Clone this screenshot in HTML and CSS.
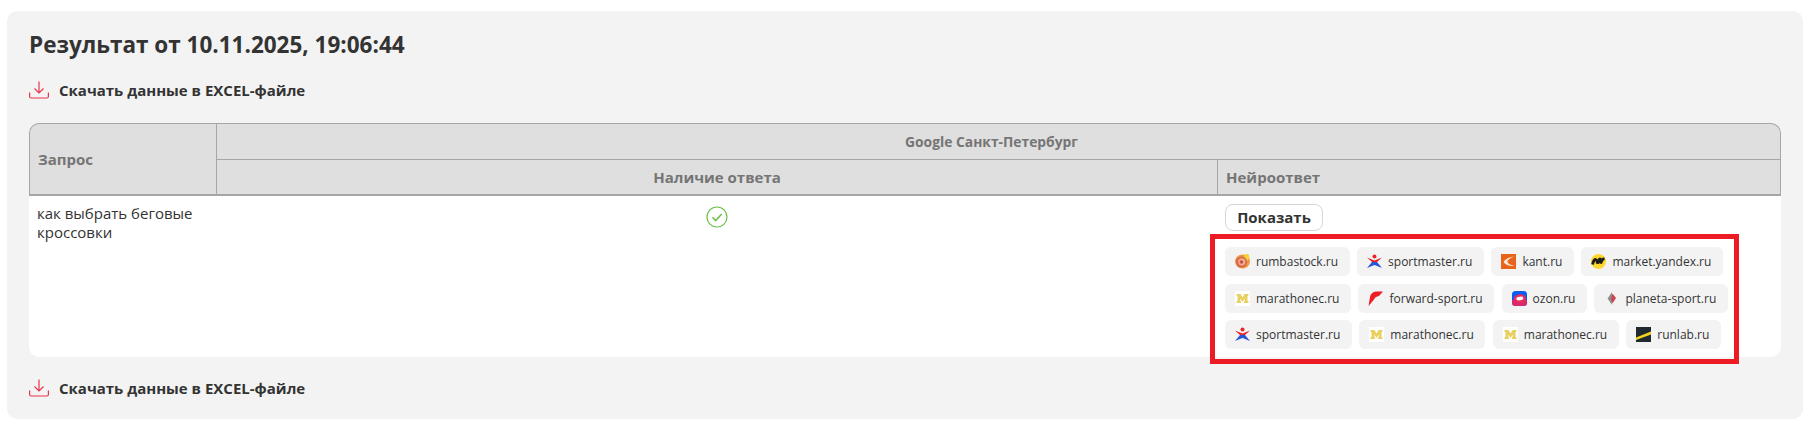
FILE: index.html
```html
<!DOCTYPE html>
<html lang="ru">
<head>
<meta charset="utf-8">
<title>Результат</title>
<link rel="stylesheet" href="styles.css">
</head>
<body>
<main class="panel">
  <h1 class="title">Результат от 10.11.2025, 19:06:44</h1>
  <a class="download download-top" href="#">
    <svg class="download-icon" viewBox="0 0 20 18" fill="none" stroke="#e8364f" stroke-width="1.200"><path d="M10 .5V11.500M5.500 7.500L10 12l4.500-4.500"/><path d="M.6 11.500V15.500q0 1.500 1.500 1.500H17.900q1.500 0 1.500-1.500V11.500"/></svg>
    <span>Скачать данные в EXCEL-файле</span>
  </a>
  <div class="table-wrap">
    <table class="result">
      <colgroup><col class="col-query"><col class="col-answer"><col></colgroup>
      <thead>
        <tr><th class="th-query" rowspan="2">Запрос</th><th class="th-center th-top" colspan="2">Google Санкт-Петербург</th></tr>
        <tr><th class="th-center">Наличие ответа</th><th class="th-neuro">Нейроответ</th></tr>
      </thead>
      <tbody>
        <tr>
          <td class="td-query">как выбрать беговые кроссовки</td>
          <td class="td-check">
            <svg class="check" viewBox="0 0 22 22" fill="none"><circle cx="11" cy="11" r="10" stroke="#6cc04a" stroke-width="1.200"/><path d="M6.500 11.200l3.200 3.300 6-6.500" stroke="#6cc04a" stroke-width="1.600"/></svg>
          </td>
          <td class="td-neuro">
            <button class="show" type="button">Показать</button>
            <div class="sources">
              <div class="chips">
                <span class="chip"><svg class="ico" viewBox="0 0 15 15"><ellipse cx="7.500" cy="7.500" rx="7.500" ry="7" fill="#ee9a3e"/><path d="M10 0h3q3 3-.5 6.500L9 4z" fill="#f3d23a"/><circle cx="6.500" cy="8" r="5.500" fill="#d9644f"/><circle cx="6.800" cy="7.800" r="3.600" fill="#efb08f"/><circle cx="6.500" cy="8" r="1.800" fill="#cf4f45"/></svg>rumbastock.ru</span>
                <span class="chip"><svg class="ico" viewBox="0 0 15 15"><use href="#sm"/></svg>sportmaster.ru</span>
                <span class="chip"><svg class="ico" viewBox="0 0 15 15"><rect width="15" height="15" fill="#e8641b"/><path d="M13 2.500Q5 3.500 2.500 8q3 4.500 11 4Q6.500 10 6.500 7.500 7 5 13 2.500z" fill="#fbe6d8"/></svg>kant.ru</span>
                <span class="chip"><svg class="ico" viewBox="0 0 15 15"><circle cx="7.500" cy="7.500" r="7.500" fill="#fdd72b"/><path d="M1.500 10.500Q3 5 4.500 5.500T6.500 9.500Q8 5 9 5t.5 4.500Q11 5 13.500 4.500" fill="none" stroke="#1c1c1c" stroke-width="2.800"/></svg>market.yandex.ru</span>
              </div>
              <div class="chips">
                <span class="chip"><svg class="ico" viewBox="0 0 15 15"><use href="#mar"/></svg>marathonec.ru</span>
                <span class="chip"><svg class="ico" viewBox="0 0 15 15"><path d="M15 .5H8Q3 1 2 6L.5 15 6 8.500Q7 5.500 11 5z" fill="#ee1c25"/></svg>forward-sport.ru</span>
                <span class="chip"><svg class="ico" viewBox="0 0 15 15"><rect width="15" height="15" rx="3.500" fill="#0b5cf5"/><path d="M0 9h15v2.500a3.500 3.500 0 0 1-3.500 3.500h-8A3.500 3.500 0 0 1 0 11.500z" fill="#f0245c" opacity=".9"/><ellipse cx="7.800" cy="7.500" rx="6" ry="4.300" fill="#ee2a5c" transform="rotate(-8 7.800 7.500)"/><ellipse cx="7.800" cy="7.500" rx="3.500" ry="1.800" fill="#fff" transform="rotate(-8 7.800 7.500)"/></svg>ozon.ru</span>
                <span class="chip"><svg class="ico" viewBox="0 0 15 15"><path d="M8 1L3.500 7.500 8 14z" fill="#8d8f92"/><path d="M8.500 2.500L12 7 8.500 12.500 7 7.500z" fill="#d0454c"/></svg>planeta-sport.ru</span>
              </div>
              <div class="chips">
                <span class="chip"><svg class="ico" viewBox="0 0 15 15"><use href="#sm"/></svg>sportmaster.ru</span>
                <span class="chip"><svg class="ico" viewBox="0 0 15 15"><use href="#mar"/></svg>marathonec.ru</span>
                <span class="chip"><svg class="ico" viewBox="0 0 15 15"><use href="#mar"/></svg>marathonec.ru</span>
                <span class="chip"><svg class="ico" viewBox="0 0 15 15"><rect width="15" height="15" fill="#1f2a30"/><path d="M0 10.500L15 4.500v3L0 13z" fill="#f4d21f"/></svg>runlab.ru</span>
              </div>
            </div>
            <div class="highlight"></div>
          </td>
        </tr>
      </tbody>
    </table>
  </div>
  <a class="download download-bottom" href="#">
    <svg class="download-icon" viewBox="0 0 20 18" fill="none" stroke="#e8364f" stroke-width="1.200"><path d="M10 .5V11.500M5.500 7.500L10 12l4.500-4.500"/><path d="M.6 11.500V15.500q0 1.500 1.500 1.500H17.900q1.500 0 1.500-1.500V11.500"/></svg>
    <span>Скачать данные в EXCEL-файле</span>
  </a>
</main>
<svg class="defs" width="0" height="0">
  <defs>
    <g id="sm"><circle cx="7.500" cy="2.500" r="2" fill="#e8232a"/><path d="M0 3.500L7.500 6.500 15 3.500 10 8H5z" fill="#e8232a"/><path d="M5 8h5l5 6-7.500-3L0 14z" fill="#2a56d8"/></g>
    <g id="mar"><rect width="15" height="15" fill="#fff"/><path d="M1.500 3h4l2 3.500 2-3.500h4v1.500l-1 .5v5l1 .5V12h-4.500v-1.500l.7-.5V7.500L7.500 11 5.300 7.500V10l.7.5V12H1.500v-1.500l1-.5V5l-1-.5z" fill="#e8cf5e"/></g>
  </defs>
</svg>
</body>
</html>
```
FILE: styles.css
```css
* { box-sizing: border-box; }
html, body { margin: 0; background: #fff; }
body {
  padding: 11px 11px 15px 7px;
  font-family: "Open Sans", "Liberation Sans", sans-serif;
  color: #333;
}
.panel {
  background: #f3f3f3;
  border-radius: 10px;
  padding: 17px 22px 18px 22px;
  height: 408px;
}
.title {
  margin: 0;
  font-size: 22.500px;
  line-height: 33px;
  font-weight: 700;
  color: #333;
}
.download {
  display: flex;
  align-items: center;
  gap: 10px;
  height: 24px;
  font-size: 15px;
  font-weight: 700;
  color: #333;
  text-decoration: none;
}
.download-top { margin-top: 17px; }
.download-bottom { margin-top: 19px; }
.download-icon { width: 20px; height: 18px; flex: none; }
.table-wrap {
  margin-top: 21px;
  background: #fff;
  border-radius: 10px;
}
.result {
  width: 100%;
  border-collapse: separate;
  border-spacing: 0;
  table-layout: fixed;
  font-size: 15px;
}
.col-query { width: 188px; }
.col-answer { width: 1000px; }
.result th {
  background: #dfdfdf;
  border-color: #a6a6a6;
  border-style: solid;
  border-width: 1px 0 0 0;
  color: #757575;
  font-weight: 700;
  font-size: 15px;
  padding: 0 0 0 8px;
  text-align: left;
  height: 36px;
}
.result .th-query {
  border-width: 1px 1px 2px 1px;
  border-radius: 10px 0 0 0;
}
.result .th-center { text-align: center; padding: 0; }
.result .th-top {
  border-right: 1px solid #a6a6a6;
  border-radius: 0 10px 0 0;
  font-size: 13.850px;
  padding-right: 14px;
}
.result thead tr:nth-child(2) th {
  border-bottom-width: 2px;
  height: 37px;
}
.result .th-neuro {
  border-left: 1px solid #a6a6a6;
  border-right: 1px solid #a6a6a6;
}
.result td {
  vertical-align: top;
  padding: 0;
}
.result .td-query {
  padding: 8px 20px 0 8px;
  line-height: 19px;
  color: #333;
}
.result .td-check { text-align: center; padding-top: 10px; }
.check { width: 22px; height: 22px; display: inline-block; vertical-align: top; }
.result .td-neuro {
  position: relative;
  padding: 8px 0 8px 8px;
}
.show {
  display: block;
  width: 98px;
  height: 27px;
  padding: 0 0 2px;
  background: #fff;
  border: 1px solid #d6d6d6;
  border-radius: 8px;
  font-family: inherit;
  font-size: 15px;
  font-weight: 700;
  color: #333;
}
.sources {
  display: flex;
  flex-direction: column;
  gap: 7.500px;
  margin-top: 16px;
}
.chips { display: flex; gap: 7.500px; }
.chip {
  display: inline-flex;
  align-items: center;
  height: 29px;
  padding: 0 11.500px 0 10px;
  gap: 6px;
  background: #f3f3f3;
  border-radius: 6px;
  font-size: 12px;
  color: #333;
  white-space: nowrap;
}
.ico { width: 15px; height: 15px; flex: none; }
.highlight {
  position: absolute;
  left: -7px;
  top: 38px;
  width: 529px;
  height: 130px;
  border: 5px solid #ed1c24;
  pointer-events: none;
}
.defs { position: absolute; }
```
